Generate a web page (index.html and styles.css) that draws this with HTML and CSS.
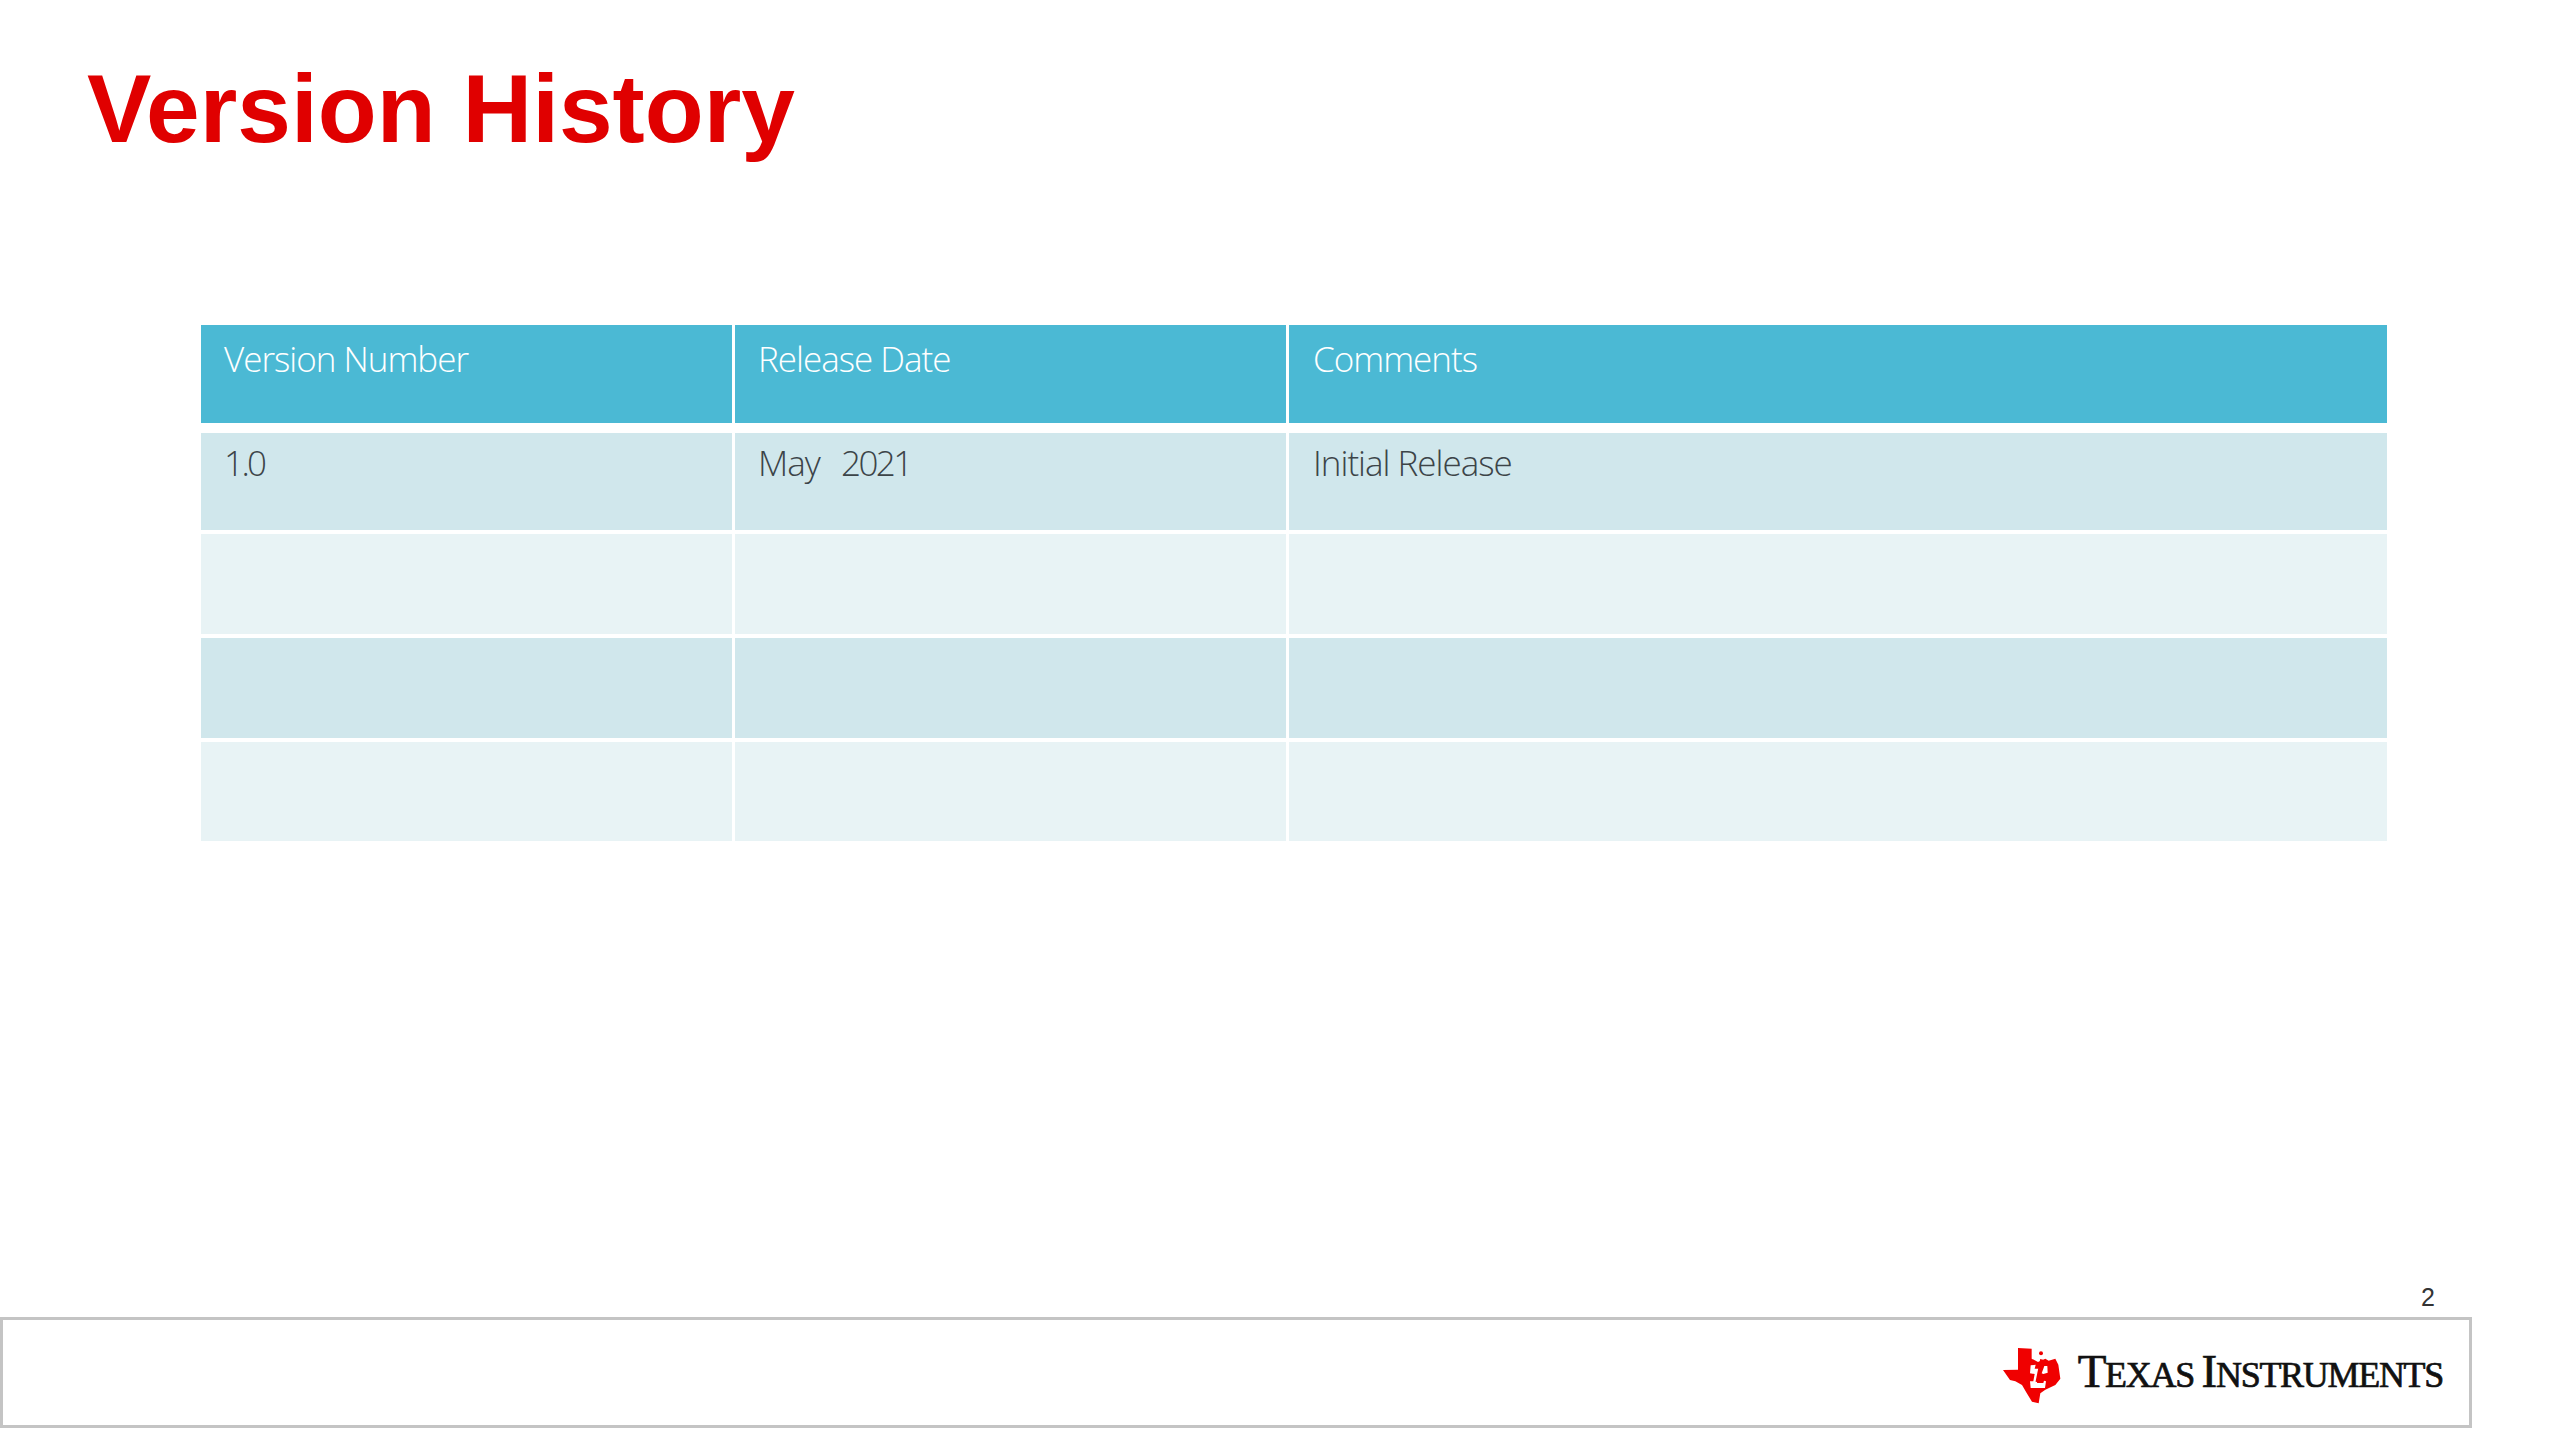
FILE: index.html
```html
<!DOCTYPE html>
<html lang="en">
<head>
<meta charset="utf-8">
<title>Version History</title>
<link rel="stylesheet" href="styles.css">
</head>
<body>
<main class="slide">
  <h1 class="title">Version History</h1>
  <div class="table" role="table">
    <div class="cell head" role="columnheader">Version Number</div>
    <div class="cell head" role="columnheader">Release Date</div>
    <div class="cell head last" role="columnheader">Comments</div>
    <div class="cell odd" role="cell"><span class="digits">1.0</span></div>
    <div class="cell odd date" role="cell">May  <span class="digits">2021</span></div>
    <div class="cell odd last" role="cell">Initial Release</div>
    <div class="cell even" role="cell"></div>
    <div class="cell even" role="cell"></div>
    <div class="cell even last" role="cell"></div>
    <div class="cell odd" role="cell"></div>
    <div class="cell odd" role="cell"></div>
    <div class="cell odd last" role="cell"></div>
    <div class="cell even" role="cell"></div>
    <div class="cell even" role="cell"></div>
    <div class="cell even last" role="cell"></div>
  </div>
  <div class="page-number">2</div>
  <footer class="footer">
    <div class="logo">
      <svg class="logo-mark" viewBox="0 0 270 210" width="90" height="70" aria-hidden="true">
        <path class="mark-red" d="M84 30 L125 32 L125 62 L144 72 L166 62 L176 68 L196 62 L205 80 L211 122 L196 141 L166 155 L151 166 L146 196 L126 191 L110 165 L96 141 L76 130 L60 126 L39 96 L84 95 Z"/>
        <path class="mark-white" d="M122 82 L137 80 L134 92 L147 92 L141 135 L160 135 L162 128 L168 130 L165 150 L122 150 L120 130 L130 130 L134 108 L120 106 Z"/>
        <path class="mark-white" d="M163 84 L172 84 L173 104 L160 108 L155 106 Z"/>
        <path class="mark-red-line" d="M155 64 L141 132"/>
        <circle class="mark-dot" cx="153" cy="46" r="6"/>
      </svg>
      <div class="wordmark"><span class="cap">T</span>exas <span class="cap">I</span>nstruments</div>
    </div>
  </footer>
</main>
</body>
</html>
```
FILE: styles.css
```css
html, body {
  margin: 0;
  padding: 0;
  background: #fff;
}
.slide {
  width: 2560px;
  height: 1440px;
  display: flex;
  flex-direction: column;
  overflow: hidden;
  font-family: "Liberation Sans", Arial, sans-serif;
}
.title {
  margin: 54px 0 161px 87px;
  font-size: 96.5px;
  line-height: 110px;
  font-weight: 700;
  color: #e00000;
}
.table {
  margin-left: 201px;
  width: 2186px;
  display: grid;
  grid-template-columns: 531px 551px 1098px;
  grid-template-rows: 104px 97px 100px 100px 99px;
  column-gap: 3px;
  row-gap: 4px;
  font-family: "Open Sans", sans-serif;
  font-weight: 300;
  font-size: 35px;
  letter-spacing: -1px;
  line-height: 44px;
}
.cell {
  padding: 8px 0 0 23px;
  white-space: pre;
}
.cell.last {
  padding-left: 24px;
}
.head {
  background: #4bb9d4;
  color: #fff;
  padding-top: 12px;
  margin-bottom: 6px;
}
.odd {
  background: #d0e7ec;
  color: #3c4448;
}
.even {
  background: #e8f3f5;
}
.date {
  word-spacing: 2.5px;
}
.digits {
  letter-spacing: -2.6px;
}
.page-number {
  margin: auto 0 0 0;
  padding: 0 125px 0 0;
  text-align: right;
  font-size: 25px;
  line-height: 28px;
  color: #333;
}
.footer {
  margin: 6px 0 12px 0;
  width: 2472px;
  height: 111px;
  box-sizing: border-box;
  border: 3px solid #c4c4c4;
  display: flex;
  justify-content: flex-end;
  align-items: center;
  padding-right: 26px;
}
.logo {
  display: flex;
  align-items: center;
}
.logo-mark {
  display: block;
  margin-right: -2px;
}
.mark-red {
  fill: #f00000;
}
.mark-white {
  fill: #fff;
}
.mark-red-line {
  stroke: #f00000;
  stroke-width: 9;
  fill: none;
}
.mark-dot {
  fill: #f00000;
}
.wordmark {
  font-family: "Liberation Serif", serif;
  font-size: 36px;
  line-height: 44px;
  letter-spacing: -1.3px;
  color: #111;
  text-transform: uppercase;
  -webkit-text-stroke: 0.7px #111;
  white-space: pre;
}
.cap {
  font-size: 47px;
}
```
